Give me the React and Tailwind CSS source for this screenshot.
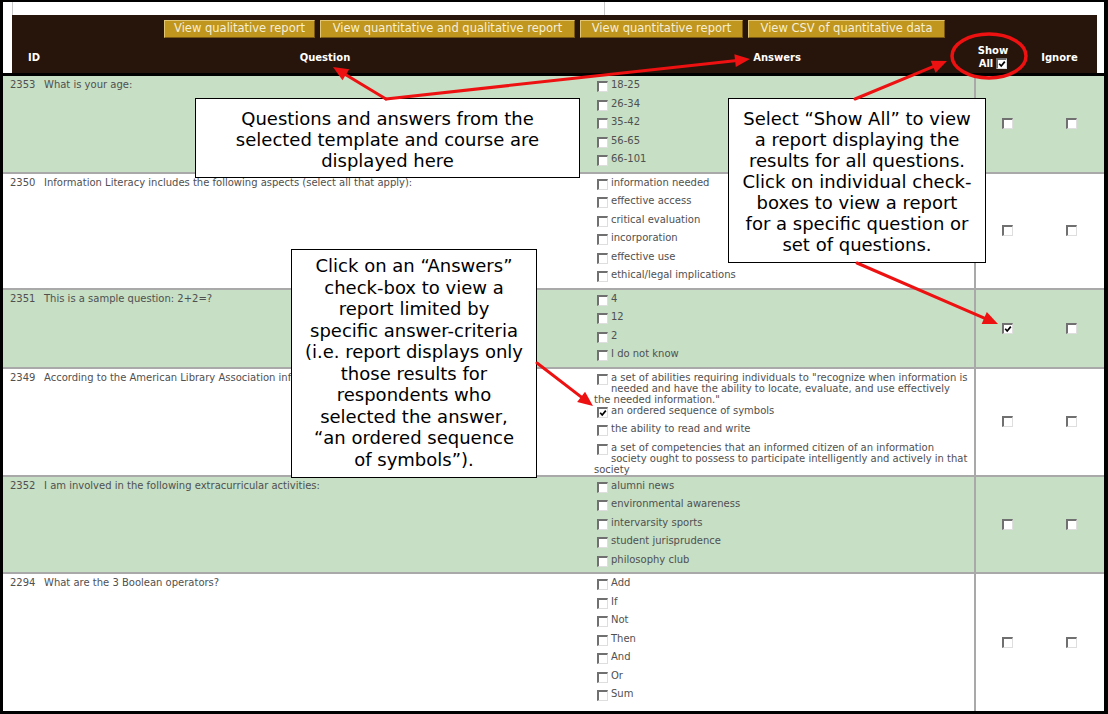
import React from "react";

const rows = [
  {
    id: "2353",
    q: "What is your age:",
    green: true,
    answers: [["18-25"], ["26-34"], ["35-42"], ["56-65"], ["66-101"]],
  },
  {
    id: "2350",
    q: "Information Literacy includes the following aspects (select all that apply):",
    answers: [
      ["information needed"],
      ["effective access"],
      ["critical evaluation"],
      ["incorporation"],
      ["effective use"],
      ["ethical/legal implications"],
    ],
  },
  {
    id: "2351",
    q: "This is a sample question: 2+2=?",
    green: true,
    show: true,
    answers: [["4"], ["12"], ["2"], ["I do not know"]],
  },
  {
    id: "2349",
    q: "According to the American Library Association information literacy is:",
    clip: true,
    answers: [
      [
        'a set of abilities requiring individuals to "recognize when information is',
        "needed and have the ability to locate, evaluate, and use effectively",
        'the needed information."',
      ],
      { lines: ["an ordered sequence of symbols"], checked: true },
      ["the ability to read and write"],
      [
        "a set of competencies that an informed citizen of an information",
        "society ought to possess to participate intelligently and actively in that",
        "society",
      ],
    ],
  },
  {
    id: "2352",
    q: "I am involved in the following extracurricular activities:",
    green: true,
    answers: [
      ["alumni news"],
      ["environmental awareness"],
      ["intervarsity sports"],
      ["student jurisprudence"],
      ["philosophy club"],
    ],
  },
  {
    id: "2294",
    q: "What are the 3 Boolean operators?",
    last: true,
    answers: [["Add"], ["If"], ["Not"], ["Then"], ["And"], ["Or"], ["Sum"]],
  },
];

const buttons = [
  { label: "View qualitative report", cls: "w-[151px]" },
  { label: "View quantitative and qualitative report", cls: "w-[255px]" },
  { label: "View quantitative report", cls: "w-[163px]" },
  { label: "View CSV of quantitative data", cls: "w-[197px]" },
];

const Check = ({ checked, className = "" }) => (
  <span
    className={`relative block w-[11px] h-[11px] bg-white border-t-2 border-l-2 border-r border-b border-t-[#707070] border-l-[#707070] border-r-[#dedede] border-b-[#dedede] ${className}`}
  >
    {checked && (
      <svg viewBox="0 0 8 8" className="absolute inset-0 w-full h-full">
        <path d="M1.2 3.8 L3.2 6 L6.8 1.6" fill="none" stroke="#000" strokeWidth="1.7" />
      </svg>
    )}
  </span>
);

const arrow = (x1, y1, x2, y2) => {
  const dx = x2 - x1;
  const dy = y2 - y1;
  const len = Math.hypot(dx, dy);
  const ux = dx / len;
  const uy = dy / len;
  const hl = 15;
  const hw = 6.5;
  const bx = x2 - ux * hl;
  const by = y2 - uy * hl;
  return {
    line: [x1, y1, bx + ux * 2, by + uy * 2],
    head: `${x2},${y2} ${bx - uy * hw},${by + ux * hw} ${bx + uy * hw},${by - ux * hw}`,
  };
};

const arrows = [
  arrow(386, 99, 333, 67),
  arrow(386, 99, 750, 59),
  arrow(855, 99, 947, 61),
  arrow(857, 263, 998, 324),
  arrow(537, 363, 593, 406),
];

const Row = ({ r }) => (
  <div
    className={`flex ${r.last ? "flex-1" : "border-b-2 border-[#a9a9a9]"} ${r.green ? "bg-[#c6dfc5]" : "bg-white"}`}
  >
    <div className="w-[590px] shrink-0 flex pl-[7px] pt-[3px] leading-[11px] whitespace-nowrap">
      <span className="w-[34px] shrink-0">{r.id}</span>
      <span className={r.clip ? "max-w-[247px] overflow-hidden" : ""}>{r.q}</span>
    </div>
    <div className="w-[383px] shrink-0 pl-[1px] pt-[3px] border-r-2 border-[#a9a9a9]">
      {r.answers.map((a, i) => {
        const lines = Array.isArray(a) ? a : a.lines;
        return (
          <div key={i} className="flow-root leading-[11px] whitespace-nowrap">
            <Check checked={a.checked} className="float-left mt-[2px] mb-[5.5px] ml-[3px] mr-[3px]" />
            {lines.map((l, j) => (
              <React.Fragment key={j}>
                {j > 0 && <br />}
                {l}
              </React.Fragment>
            ))}
          </div>
        );
      })}
    </div>
    <div className="w-[62px] shrink-0 flex items-center justify-center">
      <Check checked={r.show} />
    </div>
    <div className="flex-1 flex items-center justify-center">
      <Check />
    </div>
  </div>
);

export default function App() {
  return (
    <div className="relative w-[1108px] h-[714px] overflow-hidden bg-white font-['DejaVu_Sans',Verdana,sans-serif]">
      <div className="w-full h-full flex flex-col border-l-[3px] border-t-2 border-r-4 border-b-[3px] border-black overflow-hidden">
        {/* top strip of the embedded page */}
        <div className="h-[13px] shrink-0 ml-[9px] flex border-l border-[#c8c8c8]">
          <div className="w-[592px] border-r border-[#c8c8c8]" />
        </div>

        {/* report header */}
        <div className="h-[58px] shrink-0 ml-[9px] mr-[7px] bg-[#27150b] flex flex-col">
          <div className="flex justify-center gap-[5px] pt-[5px]">
            {buttons.map((b) => (
              <div
                key={b.label}
                className={`${b.cls} h-[18px] flex items-center justify-center bg-[#c0961f] border border-t-[#e0c575] border-l-[#e0c575] border-r-[#7a5a12] border-b-[#7a5a12] text-[11.5px] text-[#f6efd6] whitespace-nowrap`}
              >
                {b.label}
              </div>
            ))}
          </div>
          <div className="flex-1 flex items-center pt-[3px] text-[10px] font-bold text-white">
            <div className="w-[48px] pl-[16px]">ID</div>
            <div className="w-[530px] text-center">Question</div>
            <div className="w-[374px] text-center">Answers</div>
            <div className="w-[58px] flex flex-col items-center leading-[13px]">
              <span>Show</span>
              <span className="flex items-center gap-[3px]">
                All
                <Check checked />
              </span>
            </div>
            <div className="w-[75px] text-center">Ignore</div>
          </div>
        </div>

        <div className="h-[3px] shrink-0 bg-black" />

        {/* question table */}
        <div className="flex-1 flex flex-col text-[10px] text-[#505050]">
          {rows.map((r) => (
            <Row key={r.id} r={r} />
          ))}
        </div>
      </div>

      {/* callouts */}
      <div className="absolute left-[195px] top-[98px] w-[385px] h-[80px] bg-white border border-black pt-[9px] text-center text-[18px] leading-[21px] text-black whitespace-nowrap">
        Questions and answers from the
        <br />
        selected template and course are
        <br />
        displayed here
      </div>
      <div className="absolute left-[728px] top-[98px] w-[258px] h-[165px] bg-white border border-black pt-[9px] text-center text-[18px] leading-[21px] text-black whitespace-nowrap">
        Select “Show All” to view
        <br />
        a report displaying the
        <br />
        results for all questions.
        <br />
        Click on individual check-
        <br />
        boxes to view a report
        <br />
        for a specific question or
        <br />
        set of questions.
      </div>
      <div className="absolute left-[291px] top-[249px] w-[246px] h-[229px] bg-white border border-black pt-[5px] text-center text-[18px] leading-[21.5px] text-black whitespace-nowrap">
        Click on an “Answers”
        <br />
        check-box to view a
        <br />
        report limited by
        <br />
        specific answer-criteria
        <br />
        (i.e. report displays only
        <br />
        those results for
        <br />
        respondents who
        <br />
        selected the answer,
        <br />
        “an ordered sequence
        <br />
        of symbols”).
      </div>

      {/* red annotation arrows */}
      <svg className="absolute inset-0 pointer-events-none" width="1108" height="714">
        <ellipse cx="989" cy="56" rx="37" ry="22" fill="none" stroke="#ee1111" strokeWidth="3.5" />
        {arrows.map((a, i) => (
          <g key={i}>
            <line
              x1={a.line[0]}
              y1={a.line[1]}
              x2={a.line[2]}
              y2={a.line[3]}
              stroke="#ee1111"
              strokeWidth="3"
              strokeLinecap="round"
            />
            <polygon points={a.head} fill="#ee1111" />
          </g>
        ))}
      </svg>
    </div>
  );
}
